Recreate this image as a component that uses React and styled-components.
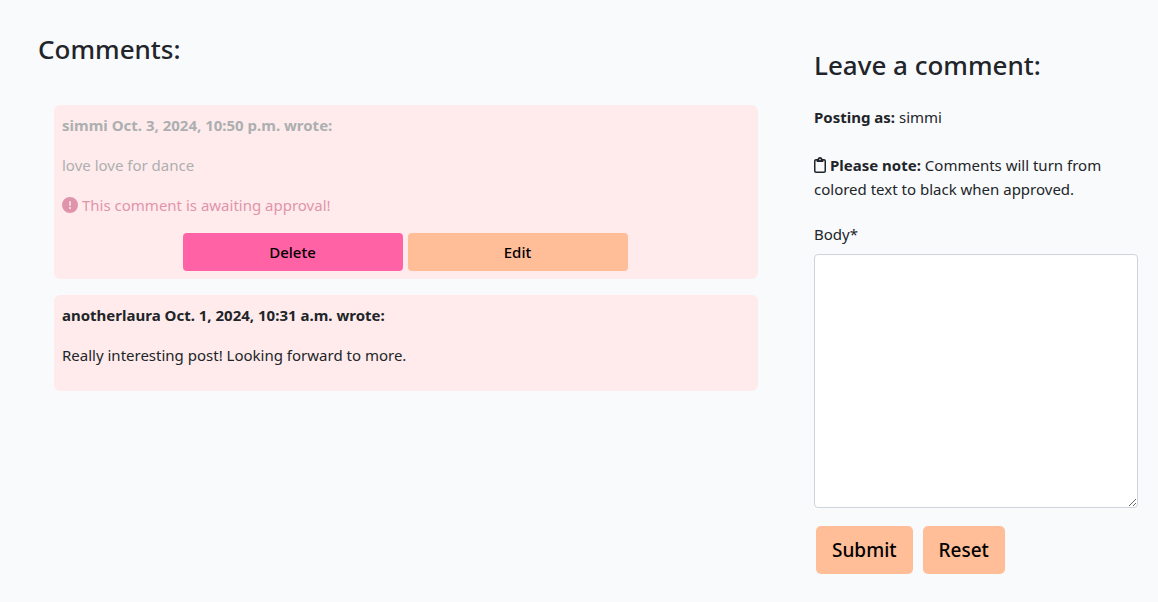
import React from "react";
import styled, { createGlobalStyle } from "styled-components";
import { FaCircleExclamation, FaRegClipboard } from "react-icons/fa6";

const GlobalStyle = createGlobalStyle`
  *, *::before, *::after { box-sizing: border-box; }
  body {
    margin: 0;
    background: #f9fafc;
    color: #212529;
    font-family: "Segoe UI", "Noto Sans", sans-serif;
    font-size: 15px;
    font-weight: 400;
    line-height: 24px;
  }
  p { margin: 0; }
  strong { font-weight: 700; }
`;

const Page = styled.main`
  display: grid;
  grid-template-columns: 2fr 1fr;
  padding: 0 4px 0 14px;

  @media (max-width: 767px) {
    grid-template-columns: 1fr;
  }
`;

const CommentsColumn = styled.section`
  padding: 32px 0 16px 24px;
`;

const FormColumn = styled.section`
  padding: 48px 16px 28px 40px;
`;

const Heading = styled.h3`
  margin: 0;
  font-size: 26px;
  font-weight: 500;
  line-height: 34px;
`;

const CommentList = styled.div`
  display: flex;
  flex-direction: column;
  gap: 16px;
  padding: 39px 16px 0;
`;

const Card = styled.article`
  display: flex;
  flex-direction: column;
  gap: 16px;
  padding: 8px 8px ${(p) => (p.$pending ? "8px" : "24px")};
  border-radius: 6px;
  background: #ffebeb;
`;

const CardText = styled.p`
  color: ${(p) => (p.$faded ? "#acafb1" : "inherit")};
`;

const Notice = styled.p`
  color: #df94ac;

  svg {
    width: 16px;
    height: 16px;
    margin-right: 4px;
    vertical-align: -2px;
  }
`;

const CardActions = styled.div`
  display: flex;
  justify-content: center;
  gap: 5px;
  padding-right: 2px;
`;

const Button = styled.button`
  border: 0;
  border-radius: 4px;
  background: ${(p) => (p.$danger ? "#ff62a5" : "#ffbd98")};
  color: #000;
  font: inherit;
  font-weight: 500;
  cursor: pointer;
`;

const CardButton = styled(Button)`
  flex: 0 1 220px;
  height: 38px;
`;

const FormButton = styled(Button)`
  height: 48px;
  padding: 0 16px;
  border-radius: 5px;
  font-size: 19px;
`;

const Intro = styled.p`
  margin-top: ${(p) => (p.$first ? "23px" : "24px")};

  svg {
    width: 12px;
    height: 16px;
    margin-right: 4px;
    vertical-align: -2px;
  }
`;

const Form = styled.form`
  margin-top: 21px;
`;

const Label = styled.label`
  display: block;
  margin-bottom: 8px;
`;

const TextArea = styled.textarea`
  display: block;
  width: 100%;
  height: 254px;
  padding: 6px 12px;
  border: 1px solid #ced4da;
  border-radius: 4px;
  background: #fff;
  color: inherit;
  font: inherit;
  resize: vertical;
`;

const FormActions = styled.div`
  display: flex;
  gap: 10px;
  padding: 18px 2px 0;
`;

export default function App() {
  return (
    <>
      <GlobalStyle />
      <Page>
        <CommentsColumn>
          <Heading>Comments:</Heading>
          <CommentList>
            <Card $pending>
              <CardText $faded>
                <strong>simmi Oct. 3, 2024, 10:50 p.m. wrote:</strong>
              </CardText>
              <CardText $faded>love love for dance</CardText>
              <Notice>
                <FaCircleExclamation aria-hidden="true" />
                This comment is awaiting approval!
              </Notice>
              <CardActions>
                <CardButton type="button" $danger>Delete</CardButton>
                <CardButton type="button">Edit</CardButton>
              </CardActions>
            </Card>
            <Card>
              <CardText>
                <strong>anotherlaura Oct. 1, 2024, 10:31 a.m. wrote:</strong>
              </CardText>
              <CardText>Really interesting post! Looking forward to more.</CardText>
            </Card>
          </CommentList>
        </CommentsColumn>
        <FormColumn>
          <Heading>Leave a comment:</Heading>
          <Intro $first>
            <strong>Posting as:</strong> simmi
          </Intro>
          <Intro>
            <FaRegClipboard aria-hidden="true" />
            <strong>Please note:</strong> Comments will turn from colored text to black when approved.
          </Intro>
          <Form onSubmit={(e) => e.preventDefault()}>
            <Label htmlFor="body">Body*</Label>
            <TextArea id="body" name="body" required />
            <FormActions>
              <FormButton type="submit">Submit</FormButton>
              <FormButton type="reset">Reset</FormButton>
            </FormActions>
          </Form>
        </FormColumn>
      </Page>
    </>
  );
}
